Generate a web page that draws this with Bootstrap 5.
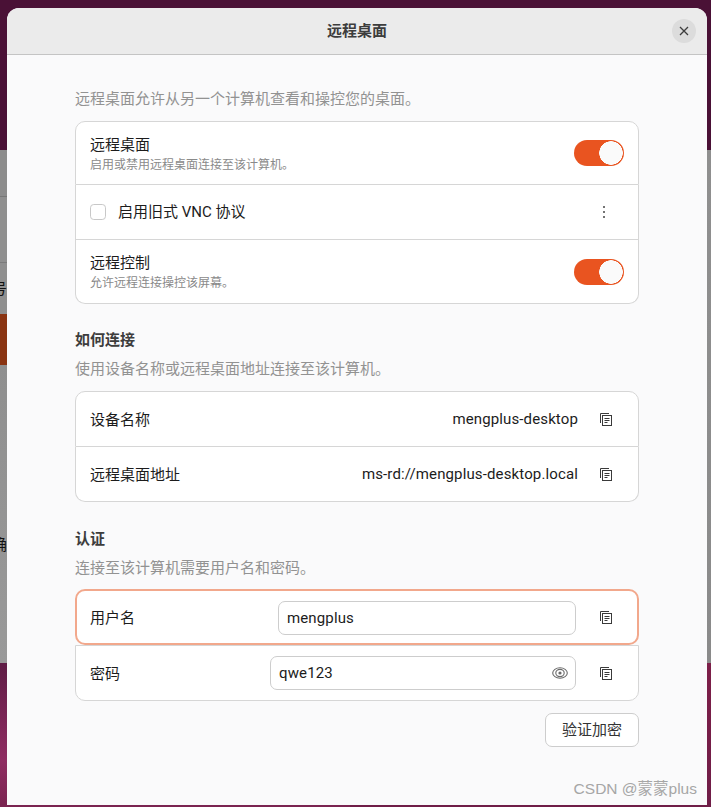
<!DOCTYPE html>
<html lang="zh">
<head>
<meta charset="utf-8">
<title>远程桌面</title>
<link href="https://cdn.jsdelivr.net/npm/bootstrap@5.3.0/dist/css/bootstrap.min.css" rel="stylesheet">
<style>
html,body{height:807px;overflow:hidden}
body{position:relative;font-family:"Roboto","Noto Sans CJK SC",sans-serif;font-size:15px;color:#2e2e2e;
background:
linear-gradient(#4a1136 0,#4a1136 150px,#8c8c8c 150px,#8c8c8c 196px,#777 196px,#777 197px,#8f8f8f 197px,#8f8f8f 262px,#7b7b7b 262px,#7b7b7b 263px,#8f8f8f 263px,#8f8f8f 314px,#8a3412 314px,#8a3412 365px,#8f8f8f 365px,#999 663px,#5f1c45 663px,#8f2d62 760px,#7a2450 807px) left/350px 100% no-repeat,
linear-gradient(#4a1136 0,#4a1136 150px,#8f8f8f 150px,#8a8a8a 663px,#7d1f49 663px,#6f1d47 807px) right/361px 100% no-repeat}
.side-glyph{position:absolute;left:-8px;font-size:15px;color:#111;line-height:20px}
.rd-window{position:relative;margin:8px 4px 2px 7px;height:797px;background:#fafafb;border-radius:12px 12px 0 0;overflow:hidden}
.rd-head{height:47px;background:#ebebeb;border-bottom:1px solid #c4c4c4}
.rd-title{font-weight:700;font-size:15px;color:#3d3d3d}
.rd-close{position:absolute;right:11px;top:11px;width:24px;height:24px;border:0;padding:0;border-radius:50%;background:#dcdcdc}
.rd-body{padding:34px 68px 0}
.rd-muted{color:#929292;line-height:20px;margin-bottom:12px}
.rd-muted.rd-tight{margin-bottom:11px}
.rd-heading{font-weight:700;color:#3d3d3d;line-height:20px;margin:26px 0 9px}
.rd-heading.rd-next{margin-top:27px}
.rd-list{--bs-list-group-border-color:#d6d6d6;--bs-list-group-border-radius:10px;--bs-list-group-bg:#fff;--bs-list-group-color:#1c1c1c;--bs-list-group-item-padding-x:14px;--bs-list-group-item-padding-y:0}
.rd-row{display:flex;align-items:center;height:55px;font-size:15px}
.rd-row.rd-tall{height:64px}
.rd-row.rd-first{height:56px}
.rd-row>span.flex-grow-1{padding-top:2px}
.rd-row.rd-auth>span.flex-grow-1{padding-top:3px}
.rd-latin{letter-spacing:.13px}
.rd-sub{font-size:12px;line-height:14px;color:#8a8a8a;margin-top:3px}
.rd-name{line-height:20px;color:#1c1c1c}
.rd-switch{padding:0;margin:0;min-height:0}
.rd-switch .form-check-input{width:50px;height:26px;margin:0;float:none;display:block;border:0;border-radius:13px;background-color:#e95420;background-image:radial-gradient(circle at 37px 13px,#fafafa 11.5px,transparent 12px);background-position:0 0;background-size:auto;box-shadow:none}
.rd-end{padding-right:14px!important}
.rd-check{width:16px;height:16px;margin:0 12px 0 0;border:1px solid #c8c8c8;border-radius:4px;flex:none;box-shadow:none}
.rd-dots{width:3px;margin-right:18px;display:flex;flex-direction:column;gap:3px}
.rd-dots i{display:block;width:2px;height:2px;background:#444;border-radius:50%}
.rd-copy{width:12px;height:13px;flex:none;margin-left:22px;margin-right:12px}
.rd-auth .rd-copy{margin-left:24px}
.rd-input{height:34px;border:1px solid #cdcdcd;border-radius:7px;padding:0 8px;font-size:15px;color:#1c1c1c;background:#fff;box-shadow:none;font-family:inherit;letter-spacing:.13px}
.rd-u{width:298px;margin-top:1px}
.rd-focus .rd-copy{margin-top:1px}
.rd-field{position:relative;width:306px}
.rd-field .rd-input{width:100%}
.rd-eye{position:absolute;right:8px;top:11px;width:16px;height:12px}
.rd-focus{border:2px solid #f2a88c!important;border-radius:10px!important;padding-left:13px!important;padding-right:13px!important}
.rd-focus + .rd-low{border-top:1px solid #d6d6d6!important;margin-top:0!important;border-top-left-radius:0;border-top-right-radius:0}
.rd-btn{--bs-btn-color:#333;--bs-btn-bg:#fff;--bs-btn-border-color:#cdcdcd;--bs-btn-border-radius:7px;--bs-btn-padding-x:0;--bs-btn-padding-y:0;--bs-btn-font-size:15px;width:94px;height:34px;margin-top:12px}
.rd-mark{position:absolute;right:10px;top:771px;font-size:15.5px;line-height:20px;color:#a6a6a6;font-family:"Liberation Sans","Noto Sans CJK SC",sans-serif}
</style>
</head>
<body>
<span class="side-glyph" style="top:279px">号</span>
<span class="side-glyph" style="top:535px">确</span>
<div class="rd-window">
  <div class="rd-head d-flex align-items-center justify-content-center">
    <span class="rd-title">远程桌面</span>
    <button class="rd-close d-flex align-items-center justify-content-center" aria-label="关闭">
      <svg width="10" height="10" viewBox="0 0 10 10"><path d="M1 1l8 8M9 1l-8 8" stroke="#3d3d3d" stroke-width="1.3" fill="none"/></svg>
    </button>
  </div>
  <div class="rd-body">
    <p class="rd-muted">远程桌面允许从另一个计算机查看和操控您的桌面。</p>
    <div class="list-group rd-list">
      <div class="list-group-item rd-row rd-tall rd-end">
        <div class="flex-grow-1"><div class="rd-name">远程桌面</div><div class="rd-sub">启用或禁用远程桌面连接至该计算机。</div></div>
        <div class="form-check form-switch rd-switch"><input class="form-check-input" type="checkbox" checked aria-label="远程桌面"></div>
      </div>
      <div class="list-group-item rd-row">
        <input class="form-check-input rd-check" type="checkbox" id="vnc">
        <label for="vnc" class="flex-grow-1 rd-name">启用旧式 VNC 协议</label>
        <div class="rd-dots"><i></i><i></i><i></i></div>
      </div>
      <div class="list-group-item rd-row rd-tall rd-end">
        <div class="flex-grow-1"><div class="rd-name">远程控制</div><div class="rd-sub">允许远程连接操控该屏幕。</div></div>
        <div class="form-check form-switch rd-switch"><input class="form-check-input" type="checkbox" checked aria-label="远程控制"></div>
      </div>
    </div>

    <div class="rd-heading">如何连接</div>
    <p class="rd-muted">使用设备名称或远程桌面地址连接至该计算机。</p>
    <div class="list-group rd-list">
      <div class="list-group-item rd-row rd-first">
        <span class="flex-grow-1">设备名称</span>
        <span class="rd-latin">mengplus-desktop</span>
        <svg class="rd-copy" viewBox="0 0 12 13"><use href="#copy-ico"/></svg>
      </div>
      <div class="list-group-item rd-row">
        <span class="flex-grow-1">远程桌面地址</span>
        <span class="rd-latin">ms-rd://mengplus-desktop.local</span>
        <svg class="rd-copy" viewBox="0 0 12 13"><use href="#copy-ico"/></svg>
      </div>
    </div>

    <div class="rd-heading rd-next">认证</div>
    <p class="rd-muted rd-tight">连接至该计算机需要用户名和密码。</p>
    <div class="list-group rd-list">
      <div class="list-group-item rd-row rd-first rd-auth rd-focus">
        <span class="flex-grow-1">用户名</span>
        <input class="form-control rd-input rd-u" type="text" value="mengplus" aria-label="用户名">
        <svg class="rd-copy" viewBox="0 0 12 13"><use href="#copy-ico"/></svg>
      </div>
      <div class="list-group-item rd-row rd-first rd-auth rd-low">
        <span class="flex-grow-1">密码</span>
        <div class="rd-field">
          <input class="form-control rd-input" type="text" value="qwe123" aria-label="密码">
          <svg class="rd-eye" viewBox="0 0 16 12" fill="none" stroke="#6a6a6a"><ellipse cx="8" cy="6" rx="7.3" ry="5.2" stroke-width="1.1"/><ellipse cx="8" cy="6" rx="4.2" ry="3.6" stroke-width="1.1"/><circle cx="8" cy="6" r="1.6" fill="#6a6a6a" stroke="none"/></svg>
        </div>
        <svg class="rd-copy" viewBox="0 0 12 13"><use href="#copy-ico"/></svg>
      </div>
    </div>
    <div class="d-flex justify-content-end"><button class="btn rd-btn">验证加密</button></div>
  </div>
  <div class="rd-mark">CSDN @蒙蒙plus</div>
</div>
<svg width="0" height="0" class="position-absolute"><defs>
  <g id="copy-ico" fill="none" stroke="#3a3a3a" stroke-width="1">
    <path d="M.5 10V.5H9"/>
    <rect x="2.5" y="2.5" width="9" height="10"/>
    <path d="M4.5 5.5h5M4.5 7.5h5M4.5 9.5h3"/>
  </g>
</defs></svg>
<script src="https://cdn.jsdelivr.net/npm/bootstrap@5.3.0/dist/js/bootstrap.bundle.min.js"></script>
</body>
</html>
